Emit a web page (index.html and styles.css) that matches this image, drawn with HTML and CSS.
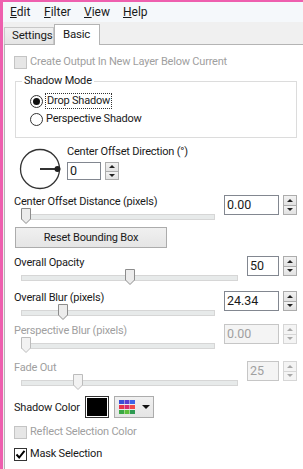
FILE: index.html
```html
<!DOCTYPE html>
<html lang="en">
<head>
    <meta charset="UTF-8">
    <title>Drop Shadow</title>
    <link rel="stylesheet" href="styles.css">
</head>
<body>
    <div class="window">
        <div class="menubar">
            <span class="menu"><u>E</u>dit</span>
            <span class="menu"><u>F</u>ilter</span>
            <span class="menu"><u>V</u>iew</span>
            <span class="menu"><u>H</u>elp</span>
        </div>
        <div class="tabs">
            <span class="tab">Settings</span>
            <span class="tab active">Basic</span>
        </div>
        <div class="panel">
            <div class="check-row disabled">
                <span class="checkbox"></span>
                <span>Create Output In New Layer Below Current</span>
            </div>

            <div class="group">
                <div class="group-title">Shadow Mode</div>
                <div class="radio-row">
                    <span class="radio checked"></span>
                    <span class="focus">Drop Shadow</span>
                </div>
                <div class="radio-row">
                    <span class="radio"></span>
                    <span>Perspective Shadow</span>
                </div>
            </div>

            <div class="dial-row">
                <svg class="dial" width="42" height="42" viewBox="0 0 42 42">
                    <circle cx="21" cy="21" r="19.5" fill="none" stroke="#333" stroke-width="1.3"/>
                    <line x1="21" y1="21" x2="39" y2="21" stroke="#333" stroke-width="2"/>
                    <circle cx="38.5" cy="21" r="3" fill="#222"/>
                </svg>
                <div class="dial-side">
                    <div class="label">Center Offset Direction (°)</div>
                    <div class="spin small">
                        <span class="field">0</span>
                        <span class="arrows"><span class="up"></span><span class="down"></span></span>
                    </div>
                </div>
            </div>

            <div class="block wide first">
                <div class="label">Center Offset Distance (pixels)</div>
                <div class="spin">
                    <span class="field">0.00</span>
                    <span class="arrows"><span class="up"></span><span class="down"></span></span>
                </div>
                <div class="slider">
                    <svg class="thumb" style="margin-left: 0px" width="10" height="16" viewBox="0 0 10 16"><path d="M0.5 0.5H9.5V11L5 15.5L0.5 11Z"/></svg>
                </div>
            </div>

            <div class="button">Reset Bounding Box</div>

            <div class="block narrow opacity">
                <div class="label">Overall Opacity</div>
                <div class="spin">
                    <span class="field">50</span>
                    <span class="arrows"><span class="up"></span><span class="down"></span></span>
                </div>
                <div class="slider">
                    <svg class="thumb" style="margin-left: 104px" width="10" height="16" viewBox="0 0 10 16"><path d="M0.5 0.5H9.5V11L5 15.5L0.5 11Z"/></svg>
                </div>
            </div>

            <div class="block wide blur">
                <div class="label">Overall Blur (pixels)</div>
                <div class="spin">
                    <span class="field">24.34</span>
                    <span class="arrows"><span class="up"></span><span class="down"></span></span>
                </div>
                <div class="slider">
                    <svg class="thumb" style="margin-left: 37px" width="10" height="16" viewBox="0 0 10 16"><path d="M0.5 0.5H9.5V11L5 15.5L0.5 11Z"/></svg>
                </div>
            </div>

            <div class="block wide persp disabled">
                <div class="label">Perspective Blur (pixels)</div>
                <div class="spin">
                    <span class="field">0.00</span>
                    <span class="arrows"><span class="up"></span><span class="down"></span></span>
                </div>
                <div class="slider">
                    <svg class="thumb" style="margin-left: 0px" width="10" height="16" viewBox="0 0 10 16"><path d="M0.5 0.5H9.5V11L5 15.5L0.5 11Z"/></svg>
                </div>
            </div>

            <div class="block narrow fade disabled">
                <div class="label">Fade Out</div>
                <div class="spin">
                    <span class="field">25</span>
                    <span class="arrows"><span class="up"></span><span class="down"></span></span>
                </div>
                <div class="slider">
                    <svg class="thumb" style="margin-left: 52px" width="10" height="16" viewBox="0 0 10 16"><path d="M0.5 0.5H9.5V11L5 15.5L0.5 11Z"/></svg>
                </div>
            </div>

            <div class="color-row">
                <span>Shadow Color</span>
                <span class="swatch"></span>
                <span class="color-button">
                    <svg width="16" height="14" viewBox="0 0 16 14">
                        <rect x="0" y="0" width="5" height="4" fill="#3b4fd6"/>
                        <rect x="5.5" y="0" width="5" height="4" fill="#5a3fd0"/>
                        <rect x="11" y="0" width="5" height="4" fill="#3f64e8"/>
                        <rect x="0" y="5" width="5" height="4" fill="#e8344a"/>
                        <rect x="5.5" y="5" width="5" height="4" fill="#d92c6a"/>
                        <rect x="11" y="5" width="5" height="4" fill="#f04a4a"/>
                        <rect x="0" y="10" width="5" height="4" fill="#3aa845"/>
                        <rect x="5.5" y="10" width="5" height="4" fill="#5cbf3a"/>
                        <rect x="11" y="10" width="5" height="4" fill="#2e9a52"/>
                    </svg>
                    <span class="caret"></span>
                </span>
            </div>

            <div class="check-row disabled reflect">
                <span class="checkbox"></span>
                <span>Reflect Selection Color</span>
            </div>
            <div class="check-row mask">
                <span class="checkbox checked">
                    <svg width="11" height="11" viewBox="0 0 11 11"><path d="M1.5 5.5L4.2 8.5L9.5 1.8" fill="none" stroke="#000" stroke-width="2"/></svg>
                </span>
                <span>Mask Selection</span>
            </div>
        </div>
    </div>
</body>
</html>
```

FILE: styles.css
```css
* {
    margin: 0;
    padding: 0;
    box-sizing: border-box;
}

body {
    width: 303px;
    height: 469px;
    overflow: hidden;
    background: #ee5fae;
    padding: 2px 0 0 3px;
    font-family: Roboto, "Liberation Sans", Arial, sans-serif;
    font-size: 11px;
    letter-spacing: -0.2px;
    color: #1a1a1a;
}

.window {
    height: 100%;
    background: #f0f0f0;
}

/* menu */
.menubar {
    display: flex;
    height: 20px;
    align-items: center;
    background: #f5f8fb;
    padding-left: 7px;
    font-size: 12px;
    letter-spacing: 0;
}

.menu {
    line-height: 14px;
}

.menu:nth-child(1) { width: 34px; }
.menu:nth-child(2) { width: 40px; }
.menu:nth-child(3) { width: 39px; }

/* tabs */
.tabs {
    display: flex;
    align-items: flex-end;
    height: 22px;
    padding-left: 1px;
    font-size: 11.5px;
}

.tab {
    height: 17px;
    width: 50px;
    padding-left: 7px;
    line-height: 15px;
    border: 1px solid #c8c8c8;
    border-bottom: none;
    background: linear-gradient(#f0f0f0, #e5e5e5);
}

.tab.active {
    height: 21px;
    width: 46px;
    padding-left: 8px;
    margin-bottom: -1px;
    line-height: 18px;
    background: #fff;
    position: relative;
    z-index: 1;
    border-color: #b4b4b4;
}

.panel {
    height: 430px;
    background: #fff;
    border-top: 1px solid #b4b4b4;
    border-left: 1px solid #b4b4b4;
    margin-left: 1px;
    padding: 10px 6px 0 9px;
}

.label {
    line-height: 14px;
    white-space: nowrap;
}

.disabled,
.disabled .label {
    color: #a0a0a0;
}

/* checkboxes */
.check-row {
    display: flex;
    align-items: center;
    height: 14px;
    line-height: 14px;
}

.checkbox {
    width: 13px;
    height: 13px;
    margin-right: 3px;
    border: 1px solid #333;
    background: #fff;
    display: flex;
    align-items: center;
    justify-content: center;
}

.disabled .checkbox {
    border-color: #c4c4c4;
    background: #e6e6e6;
}

.reflect { margin-top: 7px; }
.mask { margin-top: 8px; }

/* group box */
.group {
    margin: 12px 0 0 1px;
    height: 57px;
    border: 1px solid #dcdcdc;
    padding: 0 0 0 14px;
}

.group-title {
    margin: -8px 0 0 -8px;
    padding: 0 2px;
    background: #fff;
    width: max-content;
    line-height: 14px;
    height: 14px;
}

.radio-row {
    display: flex;
    align-items: center;
    height: 14px;
    line-height: 14px;
    margin-top: 6px;
}

.radio-row + .radio-row { margin-top: 4px; }

.radio {
    width: 13px;
    height: 13px;
    border: 1px solid #333;
    border-radius: 50%;
    margin-right: 3px;
    display: flex;
    align-items: center;
    justify-content: center;
}

.radio.checked::after {
    content: '';
    width: 7px;
    height: 7px;
    border-radius: 50%;
    background: #111;
}

.focus {
    outline: 1px dotted #333;
    outline-offset: 0;
    padding: 0 1px;
}

/* dial */
.dial-row {
    display: flex;
    margin-top: 9px;
    height: 42px;
}

.dial {
    margin: 1px 0 0 5px;
    flex: none;
}

.dial-side {
    margin: -2px 0 0 6px;
}

.dial-side .spin {
    margin-top: 3px;
}

/* spin boxes */
.spin {
    display: flex;
    gap: 4px;
    height: 20px;
}

.field {
    border: 1px solid #828790;
    background: #fff;
    padding: 0 0 0 2px;
    line-height: 18px;
    font-size: 12.5px;
    letter-spacing: 0;
}

.spin.small { height: 18px; }
.spin.small .field { width: 34px; line-height: 16px; }

.wide .field { width: 55px; }
.narrow .field { width: 32px; }

.arrows {
    display: flex;
    flex-direction: column;
    width: 14px;
}

.arrows span {
    flex: 1;
    border: 1px solid #acacac;
    background: linear-gradient(#f2f2f2, #e2e2e2);
    display: flex;
    align-items: center;
    justify-content: center;
}

.arrows span + span { border-top: none; }

.arrows .up::after {
    content: '';
    border: 3px solid transparent;
    border-top: none;
    border-bottom: 3px solid #222;
}

.arrows .down::after {
    content: '';
    border: 3px solid transparent;
    border-bottom: none;
    border-top: 3px solid #222;
}

.disabled .field {
    background: #f4f4f4;
    border-color: #c6c6c6;
}

.disabled .arrows span {
    border-color: #d6d6d6;
    background: #f4f4f4;
}

.disabled .arrows span::after {
    border-top-color: #a8a8a8;
    border-bottom-color: #a8a8a8;
}

/* slider blocks */
.block {
    display: grid;
    grid-template-columns: 1fr auto;
    grid-template-rows: 13px 16px;
    column-gap: 9px;
}

.block .spin {
    grid-row: 1 / 3;
    grid-column: 2;
}

.block .slider {
    grid-column: 1;
    margin-left: 7px;
}

.first { margin-top: 6px; }
.opacity { margin-top: 8px; }
.blur { margin-top: 6px; }
.persp { margin-top: 4px; }
.fade { margin-top: 8px; }

.slider {
    position: relative;
    height: 16px;
}

.slider::before {
    content: '';
    position: absolute;
    left: 0;
    right: 0;
    top: 6px;
    height: 4px;
    background: #e7eaea;
    border: 1px solid #d6d6d6;
}

.thumb {
    position: relative;
    display: block;
}

.thumb path {
    fill: #ececec;
    stroke: #8c8c8c;
}

.disabled .thumb path {
    fill: #f2f2f2;
    stroke: #bcbcbc;
}

/* button */
.button {
    margin: 3px 0 0 1px;
    width: 152px;
    height: 21px;
    line-height: 19px;
    text-align: center;
    border: 1px solid #acacac;
    background: linear-gradient(#f0f0f0, #e5e5e5);
}

/* colour row */
.color-row {
    display: flex;
    align-items: center;
    margin-top: 6px;
    height: 22px;
}

.swatch {
    width: 24px;
    height: 22px;
    margin-left: 5px;
    background: #000;
    border: 1px solid #333;
    box-shadow: inset 0 0 0 1px #fff;
}

.color-button {
    display: flex;
    align-items: center;
    width: 40px;
    height: 22px;
    margin-left: 5px;
    padding-left: 4px;
    border: 1px solid #acacac;
    background: linear-gradient(#f0f0f0, #e5e5e5);
}

.caret {
    margin-left: 7px;
    border: 4px solid transparent;
    border-bottom: none;
    border-top: 4px solid #111;
}
```
